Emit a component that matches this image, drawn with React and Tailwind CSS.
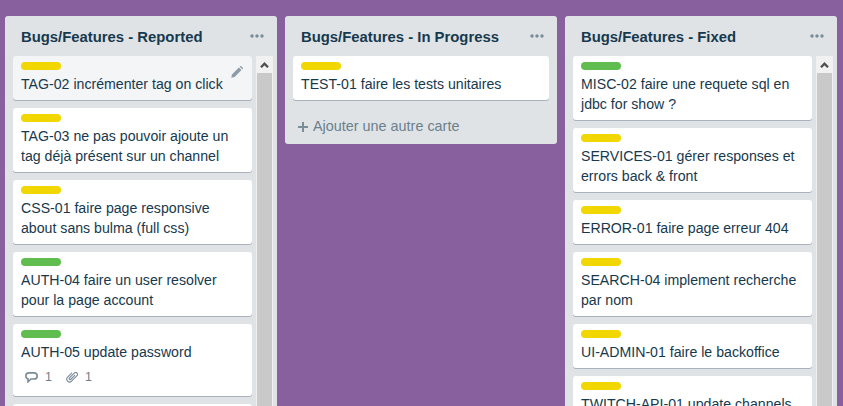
import React from "react";

const YELLOW = "bg-[#f2d600]";
const GREEN = "bg-[#61bd4f]";

const reported = [
  { label: YELLOW, text: "TAG-02 incrémenter tag on click", hover: true },
  { label: YELLOW, text: "TAG-03 ne pas pouvoir ajoute un tag déjà présent sur un channel" },
  { label: YELLOW, text: "CSS-01 faire page responsive about sans bulma (full css)" },
  { label: GREEN, text: "AUTH-04 faire un user resolver pour la page account" },
  { label: GREEN, text: "AUTH-05 update password", badges: true },
  { label: YELLOW, text: "" },
];

const progress = [{ label: YELLOW, text: "TEST-01 faire les tests unitaires" }];

const fixed = [
  { label: GREEN, text: "MISC-02 faire une requete sql en jdbc for show ?" },
  { label: YELLOW, text: "SERVICES-01 gérer responses et errors back & front" },
  { label: YELLOW, text: "ERROR-01 faire page erreur 404" },
  { label: YELLOW, text: "SEARCH-04 implement recherche par nom" },
  { label: YELLOW, text: "UI-ADMIN-01 faire le backoffice" },
  { label: YELLOW, text: "TWITCH-API-01 update channels" },
];

const Dots = () => (
  <svg width="14" height="4" viewBox="0 0 14 4" className="mb-[2px] text-[#798d99]" fill="currentColor">
    <circle cx="2" cy="2" r="1.7" />
    <circle cx="7" cy="2" r="1.7" />
    <circle cx="12" cy="2" r="1.7" />
  </svg>
);

const Pencil = () => (
  <svg width="12" height="12" viewBox="0 0 12 12" fill="#8c9ca8" className="absolute right-[9px] top-[10px]">
    <path d="M0.3 11.7 L1 8.4 L7.9 1.5 L10.5 4.1 L3.6 11 Z" />
    <path d="M8.7 0.7 L9.3 0.2 Q9.8 -0.1 10.3 0.2 L11.8 1.7 Q12.1 2.2 11.8 2.7 L11.3 3.3 Z" />
  </svg>
);

const CommentIcon = () => (
  <svg width="13" height="11" viewBox="0 0 13 11" fill="none" stroke="#798d99" strokeWidth="1.6">
    <path d="M4.2 0.9 H8.8 Q12.2 0.9 12.2 3.9 Q12.2 7 8.8 7 H6 L3 9.8 V6.8 Q0.8 6.2 0.8 3.9 Q0.8 0.9 4.2 0.9 Z" />
  </svg>
);

const ClipIcon = () => (
  <svg width="12" height="12" viewBox="0 0 12 12" fill="none" stroke="#798d99" strokeWidth="1.1" strokeLinecap="round">
    <g transform="rotate(45 6 6)">
      <path d="M3 3.5 V9.2 a2.8 2.8 0 0 0 5.6 0 V1.6 a1.9 1.9 0 0 0 -3.8 0 V8.4 a1 1 0 0 0 2 0 V3" />
    </g>
  </svg>
);

const Card = ({ card }) => (
  <div
    className={`relative mb-2 shrink-0 rounded-[3px] px-2 pt-[6px] pb-[6px] shadow-[0_1px_0_rgba(9,30,66,0.25)] ${
      card.hover ? "bg-[#f4f5f7]" : "bg-white"
    }`}
  >
    <div className={`mb-1 h-2 w-10 rounded-[4px] ${card.label}`} />
    <div className="text-[14.15px] leading-5 text-[#17394d]">{card.text}</div>
    {card.hover && <Pencil />}
    {card.badges && (
      <div className="mt-[5px] mb-[3px] flex h-[20px] items-center pl-1 text-[12.5px] text-[#6b808c]">
        <CommentIcon />
        <span className="ml-[7px] w-[10px]">1</span>
        <span className="ml-[11px] flex items-center">
          <ClipIcon />
          <span className="ml-[7px]">1</span>
        </span>
      </div>
    )}
  </div>
);

const Scrollbar = () => (
  <div className="ml-1 flex w-[17px] shrink-0 flex-col bg-[#f1f1f1]">
    <div className="flex h-[17px] shrink-0 items-center justify-center">
      <svg width="9" height="6" viewBox="0 0 9 6" fill="none" stroke="#505050" strokeWidth="2.3">
        <path d="M1 5.2 L4.5 1.7 L8 5.2" />
      </svg>
    </div>
    <div className="mx-[1px] flex-1 bg-[#c9c9c9]" />
  </div>
);

const List = ({ title, cards, scroll }) => (
  <div className="flex w-[272px] shrink-0 flex-col self-start rounded-[3px] bg-[#dfe3e6]">
    <div className="flex h-[40px] shrink-0 items-center justify-between pt-[2px] pl-4 pr-[13px]">
      <h2 className="text-[14.85px] font-bold text-[#17394d]">{title}</h2>
      <Dots />
    </div>
    {scroll ? (
      <div className="flex h-[360px] overflow-hidden pl-2 pr-1">
        <div className="flex min-w-0 flex-1 flex-col">
          {cards.map((c, i) => (
            <Card key={i} card={c} />
          ))}
        </div>
        <Scrollbar />
      </div>
    ) : (
      <>
        <div className="px-2">
          {cards.map((c, i) => (
            <Card key={i} card={c} />
          ))}
        </div>
        <div className="flex h-[36px] items-center pt-[2px] pl-3 text-[14.4px] text-[#6b808c]">
          <svg width="12" height="12" viewBox="0 0 12 12" fill="#798d99" className="mr-1">
            <path d="M5 1 H7 V5 H11 V7 H7 V11 H5 V7 H1 V5 H5 Z" />
          </svg>
          Ajouter une autre carte
        </div>
      </>
    )}
  </div>
);

export default function App() {
  return (
    <div
      className="flex h-screen gap-2 overflow-hidden bg-[#89609e] pt-4 pl-[5px]"
      style={{ fontFamily: '"Liberation Sans", Arial, sans-serif' }}
    >
      <List title="Bugs/Features - Reported" cards={reported} scroll />
      <List title="Bugs/Features - In Progress" cards={progress} />
      <List title="Bugs/Features - Fixed" cards={fixed} scroll />
    </div>
  );
}
